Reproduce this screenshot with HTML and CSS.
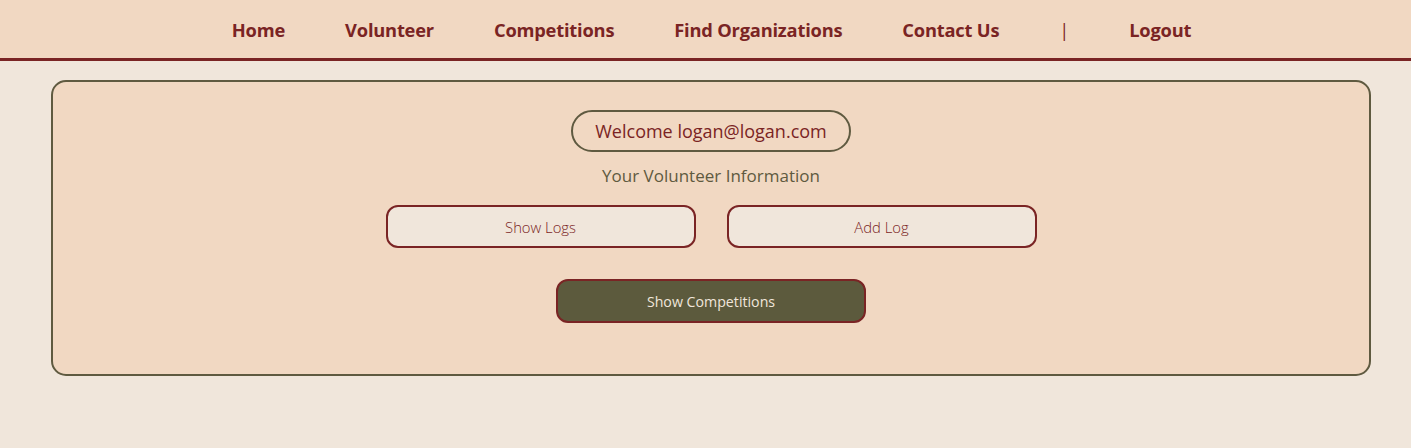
FILE: index.html
```html
<!DOCTYPE html>
<html lang="en">
<head>
<meta charset="utf-8">
<title>Volunteer</title>
<link rel="stylesheet" href="styles.css">
</head>
<body>
<nav class="topnav">
  <ul class="nav-list">
    <li><a href="#" class="nav-link">Home</a></li>
    <li><a href="#" class="nav-link">Volunteer</a></li>
    <li><a href="#" class="nav-link">Competitions</a></li>
    <li><a href="#" class="nav-link">Find Organizations</a></li>
    <li><a href="#" class="nav-link">Contact Us</a></li>
    <li><span class="nav-sep">|</span></li>
    <li><a href="#" class="nav-link">Logout</a></li>
  </ul>
</nav>
<main class="page">
  <section class="card">
    <div class="welcome">Welcome logan@logan.com</div>
    <h2 class="subtitle">Your Volunteer Information</h2>
    <div class="btn-row">
      <button class="btn btn-light">Show Logs</button>
      <button class="btn btn-light">Add Log</button>
    </div>
    <button class="btn btn-dark">Show Competitions</button>
  </section>
</main>
</body>
</html>
```
FILE: styles.css
```css
* { box-sizing: border-box; }
html, body {
  margin: 0;
  padding: 0;
  background: #f0e6db;
  font-family: "Open Sans", "Noto Sans", sans-serif;
}
.topnav {
  background: #f1d8c2;
  border-bottom: 3px solid #7a2424;
  height: 61px;
}
.nav-list {
  list-style: none;
  margin: 0;
  padding: 0 0 0 12px;
  height: 58px;
  display: flex;
  justify-content: center;
  align-items: center;
  gap: 60px;
}
.nav-link, .nav-sep {
  color: #7a2424;
  font-weight: 700;
  font-size: 18.3px;
  text-decoration: none;
  letter-spacing: -0.2px;
}
.nav-sep { font-weight: 400; }
.page {
  padding: 19px 40px 0 51px;
}
.card {
  background: #f1d8c2;
  border: 2px solid #5f5a40;
  border-radius: 15px;
  height: 296px;
  display: flex;
  flex-direction: column;
  align-items: center;
  padding-top: 28px;
}
.welcome {
  border: 2px solid #5f5a40;
  border-radius: 22px;
  height: 42px;
  padding: 0 22px;
  display: flex;
  align-items: center;
  color: #7a2424;
  font-size: 18px;
}
.subtitle {
  margin: 12px 0 0;
  font-size: 17px;
  font-weight: 400;
  color: #5f5a40;
  line-height: 24px;
}
.btn-row {
  display: flex;
  gap: 31px;
  margin-top: 17px;
}
.btn {
  width: 310px;
  height: 43px;
  border: 2px solid #7a2424;
  border-radius: 12px;
  font-family: inherit;
  font-size: 14.8px;
  font-weight: 300;
  cursor: pointer;
}
.btn-light {
  background: #f0e6db;
  color: #7a2424;
}
.btn-dark {
  margin-top: 31px;
  height: 44px;
  background: #5c5a3d;
  color: #f0e6db;
  font-size: 14.2px;
  font-weight: 400;
}
```
